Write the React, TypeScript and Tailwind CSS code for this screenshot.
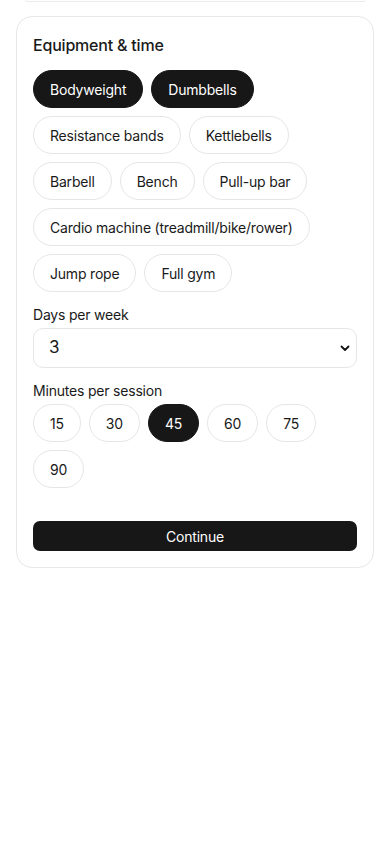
import React from 'react'

const equipment = [
  'Bodyweight',
  'Dumbbells',
  'Resistance bands',
  'Kettlebells',
  'Barbell',
  'Bench',
  'Pull-up bar',
  'Cardio machine (treadmill/bike/rower)',
  'Jump rope',
  'Full gym',
]

const minutes = [15, 30, 45, 60, 75, 90]

const Chip: React.FC<{ label: string; active?: boolean; onClick?: () => void }> = ({ label, active, onClick }) => (
  <button
    type="button"
    onClick={onClick}
    className={
      active
        ? 'h-[38px] rounded-full border border-[#171717] bg-[#171717] px-4 text-[14px] tracking-[-0.2px] text-white'
        : 'h-[38px] rounded-full border border-[#e6e6e6] bg-white px-4 text-[14px] tracking-[-0.2px] text-[#1a1a1a]'
    }
  >
    {label}
  </button>
)

export default function App() {
  const [selected, setSelected] = React.useState<string[]>(['Bodyweight', 'Dumbbells'])
  const [days, setDays] = React.useState('3')
  const [mins, setMins] = React.useState(45)

  const toggle = (item: string) =>
    setSelected(prev => (prev.includes(item) ? prev.filter(i => i !== item) : [...prev, item]))

  return (
    <div className="min-h-screen bg-white px-4 text-[#1a1a1a]" style={{ fontFamily: 'Inter, "Noto Sans", sans-serif' }}>
      <div className="mx-[9px] h-[2px] rounded-b-[12px] border-x border-b border-[#ebebeb]" />

      <div className="mt-[14px] rounded-2xl border border-[#e8e8e8] bg-white p-4">
        <h2 className="text-[16px] leading-6 font-medium tracking-[-0.2px]">Equipment &amp; time</h2>

        <div className="mt-[13px] flex flex-wrap gap-2">
          {equipment.map(item => (
            <Chip key={item} label={item} active={selected.includes(item)} onClick={() => toggle(item)} />
          ))}
        </div>

        <label className="mt-[13px] block text-[14px] leading-5 tracking-[-0.2px]">Days per week</label>
        <div className="relative mt-[3px]">
          <select
            value={days}
            onChange={e => setDays(e.target.value)}
            className="h-10 w-full appearance-none rounded-[10px] border border-[#e6e6e6] bg-white pl-[15px] text-[17px] text-[#1a1a1a] outline-none"
          >
            {[1, 2, 3, 4, 5, 6, 7].map(d => (
              <option key={d} value={String(d)}>
                {d}
              </option>
            ))}
          </select>
          <svg
            className="pointer-events-none absolute right-[6px] top-1/2 -translate-y-1/2"
            width="12"
            height="12"
            viewBox="0 0 12 12"
            fill="none"
          >
            <path d="M2.5 4.5 6 8l3.5-3.5" stroke="#111" strokeWidth="1.8" strokeLinecap="round" strokeLinejoin="round" />
          </svg>
        </div>

        <label className="mt-[13px] block text-[14px] leading-5 tracking-[-0.2px]">Minutes per session</label>
        <div className="mt-[3px] flex flex-wrap gap-2">
          {minutes.map(m => (
            <Chip key={m} label={String(m)} active={mins === m} onClick={() => setMins(m)} />
          ))}
        </div>

        <button
          type="button"
          className="mt-[33px] h-[30px] w-full rounded-[7px] bg-[#171717] text-[14px] tracking-[-0.2px] text-white"
        >
          Continue
        </button>
      </div>
    </div>
  )
}
